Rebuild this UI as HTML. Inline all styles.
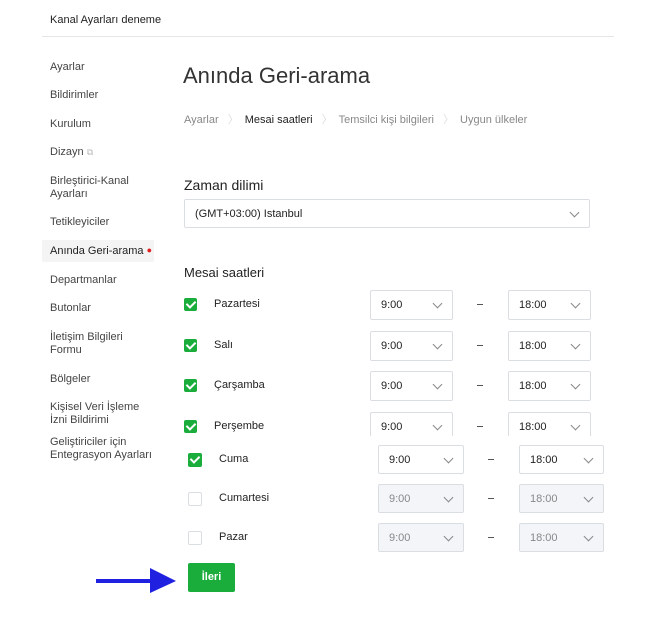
<!DOCTYPE html><html><head><meta charset="utf-8"><style>
*{margin:0;padding:0;box-sizing:border-box}
body{width:662px;height:625px;background:#fff;font-family:"Liberation Sans",sans-serif;color:#222;position:relative;overflow:hidden}
.a{position:absolute;white-space:nowrap}
.nav{font-size:11px;color:#444;left:50px}
.sel{position:absolute;border:1px solid #dadde1;border-radius:2px;background:#fff;font-size:11px;color:#222}
.sel span{position:absolute;left:10px}
.sel i{position:absolute;right:11px;width:7px;height:7px;border-right:1px solid #888;border-bottom:1px solid #888;transform:rotate(45deg)}
.dis{background:#f3f5f8;color:#888}
.cb{position:absolute;width:13px;height:13px;border-radius:2px;background:#1aad3b}
.cb:after{content:"";position:absolute;left:4px;top:1px;width:4px;height:7px;border-right:2px solid #fff;border-bottom:2px solid #fff;transform:rotate(45deg)}
.cb.off{background:#fff;border:1px solid #dadde1}.cb.off:after{display:none}
.lbl{position:absolute;font-size:11px;color:#222}
.dash{position:absolute;width:6px;height:1px;background:#555}
</style></head><body>
<div class="a" style="left:50px;top:14px;font-size:11px">Kanal Ayarları deneme</div>
<div class="a" style="left:42px;top:36px;width:572px;height:1px;background:#e6e6e6"></div>
<div class="a nav" style="top:61px">Ayarlar</div>
<div class="a nav" style="top:89px">Bildirimler</div>
<div class="a nav" style="top:118px">Kurulum</div>
<div class="a nav" style="top:146px">Dizayn <span style="color:#bbb;font-size:9px">⧉</span></div>
<div class="a nav" style="top:175px;line-height:13px">Birleştirici-Kanal<br>Ayarları</div>
<div class="a nav" style="top:216px">Tetikleyiciler</div>
<div class="a" style="left:42px;top:240px;width:112px;height:22px;background:#f4f4f5;border-radius:2px"></div>
<div class="a nav" style="top:245px;color:#222">Anında Geri-arama <span style="color:#e02020;font-size:9px;vertical-align:top">●</span></div>
<div class="a nav" style="top:274px">Departmanlar</div>
<div class="a nav" style="top:302px">Butonlar</div>
<div class="a nav" style="top:331px;line-height:13px">İletişim Bilgileri<br>Formu</div>
<div class="a nav" style="top:373px">Bölgeler</div>
<div class="a nav" style="top:401px;line-height:13px">Kişisel Veri İşleme<br>İzni Bildirimi</div>
<div class="a nav" style="top:436px;line-height:13px">Geliştiriciler için<br>Entegrasyon Ayarları</div>
<div class="a" style="left:183px;top:63px;font-size:22px;color:#333;font-weight:300">Anında Geri-arama</div>
<div class="a" style="left:184px;top:111px;font-size:11px;color:#888">Ayarlar <span style="color:#ddd;margin:0 6px">〉</span><span style="color:#222">Mesai saatleri</span> <span style="color:#ddd;margin:0 6px">〉</span>Temsilci kişi bilgileri <span style="color:#ddd;margin:0 6px">〉</span>Uygun ülkeler</div>
<div class="a" style="left:184px;top:177px;font-size:14px">Zaman dilimi</div>
<div class="sel" style="left:184px;top:199px;width:406px;height:29px"><span style="top:8px">(GMT+03:00) Istanbul</span><i style="top:9px"></i></div>
<div class="a" style="left:184px;top:265px;font-size:13px">Mesai saatleri</div>

<div class="cb" style="left:184px;top:298px"></div><div class="lbl" style="left:214px;top:298px">Pazartesi</div>
<div class="sel" style="left:370px;top:290px;width:83px;height:30px"><span style="top:8px">9:00</span><i style="top:9px"></i></div>
<div class="dash" style="left:477px;top:304px"></div>
<div class="sel" style="left:508px;top:290px;width:83px;height:30px"><span style="top:8px">18:00</span><i style="top:9px"></i></div>

<div class="cb" style="left:184px;top:339px"></div><div class="lbl" style="left:214px;top:339px">Salı</div>
<div class="sel" style="left:370px;top:331px;width:83px;height:30px"><span style="top:8px">9:00</span><i style="top:9px"></i></div>
<div class="dash" style="left:477px;top:345px"></div>
<div class="sel" style="left:508px;top:331px;width:83px;height:30px"><span style="top:8px">18:00</span><i style="top:9px"></i></div>

<div class="cb" style="left:184px;top:379px"></div><div class="lbl" style="left:214px;top:379px">Çarşamba</div>
<div class="sel" style="left:370px;top:371px;width:83px;height:30px"><span style="top:8px">9:00</span><i style="top:9px"></i></div>
<div class="dash" style="left:477px;top:385px"></div>
<div class="sel" style="left:508px;top:371px;width:83px;height:30px"><span style="top:8px">18:00</span><i style="top:9px"></i></div>

<div class="cb" style="left:184px;top:420px"></div><div class="lbl" style="left:214px;top:420px">Perşembe</div>
<div class="sel" style="left:370px;top:412px;width:83px;height:30px;border-bottom:none"><span style="top:8px">9:00</span><i style="top:9px"></i></div>
<div class="dash" style="left:477px;top:426px"></div>
<div class="sel" style="left:508px;top:412px;width:83px;height:30px;border-bottom:none"><span style="top:8px">18:00</span><i style="top:9px"></i></div>
<div class="a" style="left:170px;top:436px;width:450px;height:8px;background:#fff"></div>

<div class="cb" style="left:188px;top:453px;width:14px;height:14px"></div><div class="lbl" style="left:219px;top:453px">Cuma</div>
<div class="sel" style="left:378px;top:445px;width:86px;height:29px"><span style="top:8px">9:00</span><i style="top:9px"></i></div>
<div class="dash" style="left:488px;top:459px"></div>
<div class="sel" style="left:519px;top:445px;width:85px;height:29px"><span style="top:8px">18:00</span><i style="top:9px"></i></div>

<div class="cb off" style="left:188px;top:492px;width:14px;height:14px"></div><div class="lbl" style="left:219px;top:492px">Cumartesi</div>
<div class="sel dis" style="left:378px;top:484px;width:86px;height:29px"><span style="top:8px">9:00</span><i style="top:9px"></i></div>
<div class="dash" style="left:488px;top:498px"></div>
<div class="sel dis" style="left:519px;top:484px;width:85px;height:29px"><span style="top:8px">18:00</span><i style="top:9px"></i></div>

<div class="cb off" style="left:188px;top:531px;width:14px;height:14px"></div><div class="lbl" style="left:219px;top:531px">Pazar</div>
<div class="sel dis" style="left:378px;top:523px;width:86px;height:29px"><span style="top:8px">9:00</span><i style="top:9px"></i></div>
<div class="dash" style="left:488px;top:537px"></div>
<div class="sel dis" style="left:519px;top:523px;width:85px;height:29px"><span style="top:8px">18:00</span><i style="top:9px"></i></div>

<div class="a" style="left:188px;top:563px;width:47px;height:29px;background:#1aad3b;border-radius:2px;color:#fff;font-size:11px;font-weight:bold;text-align:center;line-height:28px">İleri</div>
<svg class="a" style="left:90px;top:564px" width="90" height="32"><rect x="6" y="15" width="56" height="4" fill="#2020e0"/><polygon points="60,4 86,17 60,29" fill="#2020e0"/></svg>
</body></html>
